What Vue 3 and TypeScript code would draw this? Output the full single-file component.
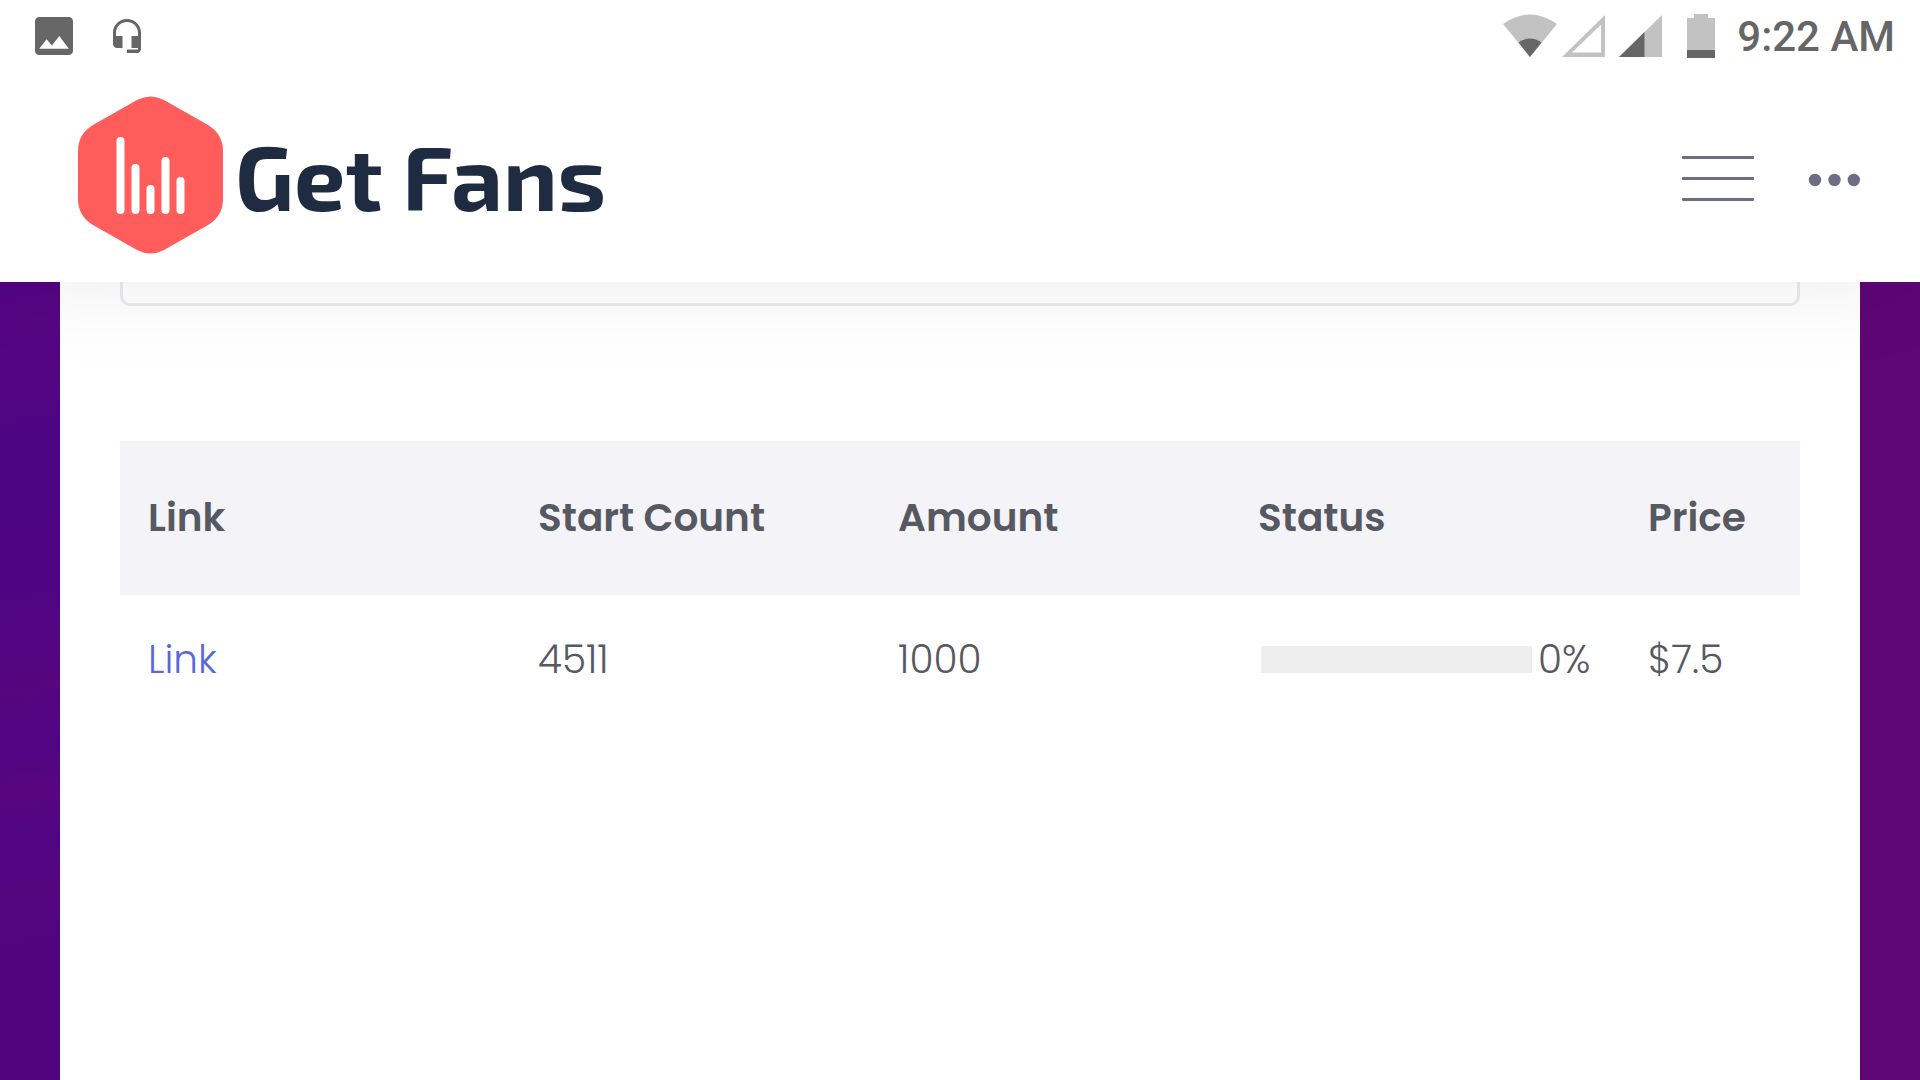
<script setup lang="ts">
import { ref } from 'vue'

interface Order {
  href: string
  startCount: number
  amount: number
  progress: number
  price: string
}

const query = ref('')
const columns = ['Link', 'Start Count', 'Amount', 'Status', 'Price']
const orders: Order[] = [
  { href: '#order', startCount: 4511, amount: 1000, progress: 0, price: '$7.5' },
]
</script>

<template>
  <div class="page">
    <header class="top">
      <div class="system">
        <div class="group notices">
          <svg width="38" height="38" viewBox="3 3 18 18" fill="#666">
            <path d="M21 19V5c0-1.100-.9-2-2-2H5c-1.100 0-2 .9-2 2v14c0 1.100.9 2 2 2h14c1.100 0 2-.9 2-2zM8.500 13.500l2.500 3.010L14.500 12l4.500 6H5l3.500-4.500z" />
          </svg>
          <svg width="28" height="34" viewBox="0 0 28 34" fill="#666">
            <path d="M14 0C6.300 0 0 6.200 0 13.500V25c0 2.200 1.800 4 4 4h5.500V17H3v-3.500C3 7.800 8 3 14 3s11 4.800 11 10.500V17h-6.500v12H25v1.500H14V34h10c2.200 0 4-1.800 4-4V13.500C28 6.200 21.700 0 14 0z" />
          </svg>
        </div>
        <div class="group">
          <svg width="54" height="44" viewBox="0 0 54 44">
            <path d="M0 10Q27-9 54 10L27 43z" fill="#c2c2c2" />
            <path d="M15.500 28.500Q27 20.500 38.500 28.500L27 43z" fill="#666" />
          </svg>
          <svg class="signal" width="43" height="44" viewBox="0 0 43 44">
            <path d="M43 1v42H0zM39 10.500L10 38.500H39z" fill="#c2c2c2" fill-rule="evenodd" />
          </svg>
          <svg class="signal wide" width="43" height="44" viewBox="0 0 43 44">
            <path d="M43 1v42H0z" fill="#c2c2c2" />
            <path d="M25.500 18v25H0z" fill="#666" />
          </svg>
          <svg class="battery" width="28" height="44" viewBox="0 0 28 44">
            <path d="M7 0h14v4h7v40H0V4h7z" fill="#c2c2c2" />
            <path d="M0 36h28v8H0z" fill="#666" />
          </svg>
          <time class="clock">9:22 AM</time>
        </div>
      </div>

      <div class="brandbar">
        <a class="brand" href="#home">
          <svg width="145" height="158" viewBox="0 0 145 158">
            <path
              d="M59 4Q72.500-3 86 4L130 29Q145 38 145 55V103Q145 120 130 129L86 154Q72.500 161 59 154L15 129Q0 120 0 103V55Q0 38 15 29z"
              fill="#ff5c5c"
            />
            <path
              d="M42.500 45v69M57.500 72v42M72.500 93v21M87.500 65v49M102.500 85v29"
              stroke="#fff"
              stroke-width="8"
              stroke-linecap="round"
            />
          </svg>
          <span class="name">Get Fans</span>
        </a>
        <nav class="actions">
          <button type="button" aria-label="Menu">
            <svg width="72" height="45" viewBox="0 0 72 45" fill="#6c6e86">
              <rect width="72" height="3" rx="1" />
              <rect y="21" width="72" height="3" rx="1" />
              <rect y="42" width="72" height="3" rx="1" />
            </svg>
          </button>
          <button type="button" aria-label="More">
            <svg width="52" height="16" viewBox="0 0 52 16" fill="#6c6e86">
              <circle cx="7" cy="9" r="6.200" />
              <circle cx="26.500" cy="9" r="6.200" />
              <circle cx="45.800" cy="9" r="6.200" />
            </svg>
          </button>
        </nav>
      </div>
    </header>

    <main class="panel">
      <input v-model="query" class="field" type="text" aria-label="Search" />
      <table class="orders">
        <colgroup>
          <col class="c-wide" />
          <col class="c-mid" />
          <col class="c-mid" />
          <col class="c-wide" />
          <col />
        </colgroup>
        <thead>
          <tr>
            <th v-for="column in columns" :key="column" scope="col">{{ column }}</th>
          </tr>
        </thead>
        <tbody>
          <tr v-for="order in orders" :key="order.href">
            <td><a :href="order.href">Link</a></td>
            <td>{{ order.startCount }}</td>
            <td>{{ order.amount }}</td>
            <td>
              <div class="status">
                <progress :value="order.progress" max="100" aria-label="Status"></progress>
                <span>{{ order.progress }}%</span>
              </div>
            </td>
            <td>{{ order.price }}</td>
          </tr>
        </tbody>
      </table>
    </main>
  </div>
</template>

<style>
body {
  margin: 0;
}
</style>

<style scoped>
.page {
  display: flex;
  flex-direction: column;
  min-height: 100vh;
  color: #575962;
  font-family: Poppins, Inter, sans-serif;
  background:
    linear-gradient(90deg, transparent 50%, #5e0675 50%),
    linear-gradient(170deg, #500583 20%, #560682 23%, #540682 26%, #4e0583 31%, #4f0583 42%, #56067f 49%, #500583 53%, #57067f 56%, #500583 60%, #54067f 63%, #50057e 67%);
}

.top {
  position: sticky;
  top: 0;
  z-index: 1;
  background: #fff;
  box-shadow: 0 0 100px rgba(0, 0, 0, 0.08);
}

.system {
  display: flex;
  justify-content: space-between;
  align-items: center;
  height: 72px;
  padding: 0 25px 0 35px;
}

.group {
  display: flex;
  align-items: center;
}

.notices {
  gap: 40px;
}

.signal {
  margin-left: 5px;
}

.wide {
  margin-left: 14px;
}

.battery {
  margin: 0 22px 0 25px;
}

.clock {
  padding-top: 2px;
  color: #666;
  font: 500 42px/50px Roboto, sans-serif;
}

.brandbar {
  display: flex;
  justify-content: space-between;
  align-items: center;
  height: 210px;
  padding: 0 60px 0 78px;
}

.brand {
  display: flex;
  align-items: center;
  gap: 12px;
  padding-bottom: 4px;
  color: #1e2b40;
  text-decoration: none;
}

.name {
  font: 700 91px/120px "Exo 2", "Noto Sans", sans-serif;
}

.actions {
  display: flex;
  align-items: center;
  gap: 54px;
  padding-top: 3px;
}

.actions button {
  display: flex;
  padding: 0;
  border: 0;
  background: none;
}

.panel {
  flex: 1;
  margin: 0 60px;
  padding: 0 60px;
  background: #fff;
}

.field {
  display: block;
  box-sizing: border-box;
  width: 100%;
  height: 24px;
  margin-bottom: 135px;
  border: 3px solid #ebeaf2;
  border-top: 0;
  border-radius: 0 0 10px 10px;
  outline: 0;
  background: #fff;
}

.orders {
  width: 100%;
  table-layout: fixed;
  border-collapse: collapse;
  font-size: 39px;
  line-height: 58px;
  text-align: left;
}

.c-wide {
  width: 390px;
}

.c-mid {
  width: 360px;
}

th {
  padding: 48px 0 48px 28px;
  background: #f4f3f8;
  font-weight: 600;
}

td {
  padding: 36px 0 36px 28px;
  font-weight: 300;
}

td a {
  color: #5867dd;
  text-decoration: none;
}

.status {
  display: flex;
  align-items: center;
  gap: 6px;
  padding-left: 3px;
}

progress {
  appearance: none;
  width: 271px;
  height: 27px;
  margin-bottom: 2px;
  border: 0;
  background: #eee;
}

progress::-webkit-progress-bar {
  background: #eee;
}

progress::-webkit-progress-value {
  background: #5867dd;
}
</style>
